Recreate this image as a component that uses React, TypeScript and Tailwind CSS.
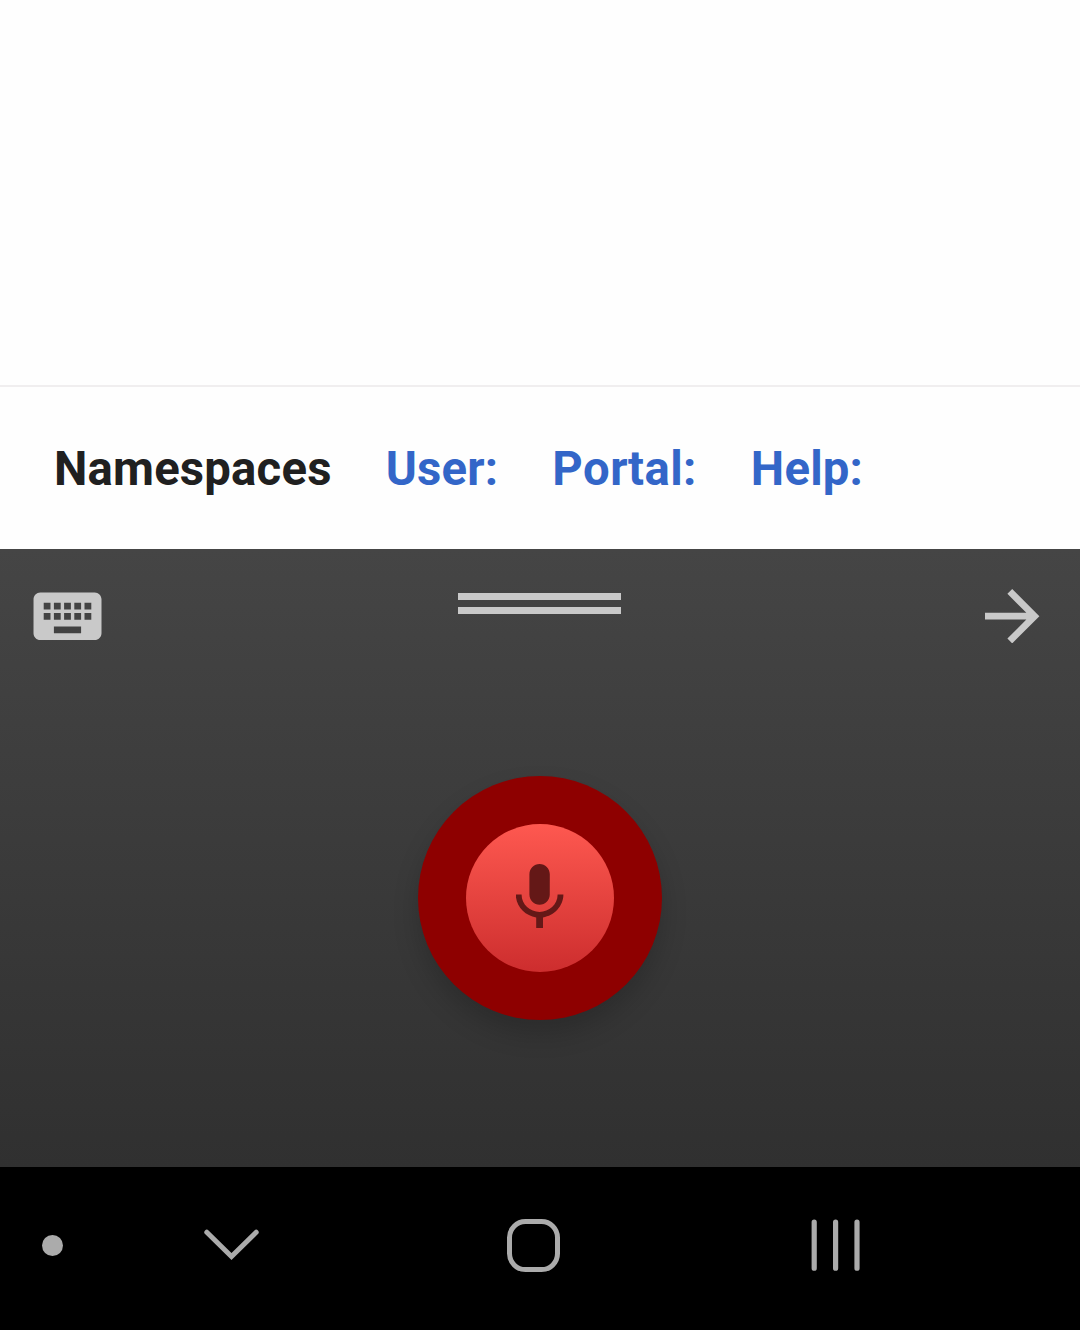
function KeyboardIcon() {
  return (
    <svg className="mt-[43px] h-[49px] w-[69px] fill-[#c9c9c9]" viewBox="0 0 69 49" aria-hidden="true">
      <path
        transform="translate(-6.3 -16.5) scale(3.4)"
        d="M20 5H4c-1.1 0-1.99.9-1.99 2L2 17c0 1.1.9 2 2 2h16c1.1 0 2-.9 2-2V7c0-1.1-.9-2-2-2zm-9 3h2v2h-2V8zm0 3h2v2h-2v-2zM8 8h2v2H8V8zm0 3h2v2H8v-2zm-1 2H5v-2h2v2zm0-3H5V8h2v2zm9 7H8v-2h8v2zm0-4h-2v-2h2v2zm0-3h-2V8h2v2zm3 3h-2v-2h2v2zm0-3h-2V8h2v2z"
      />
    </svg>
  );
}

function ArrowIcon() {
  return (
    <svg className="mt-[40px] h-[54.4px] w-[54.4px] fill-[#c9c9c9]" viewBox="4 4 16 16" aria-hidden="true">
      <path d="M12 4l-1.41 1.41L16.17 11H4v2h12.17l-5.58 5.59L12 20l8-8z" />
    </svg>
  );
}

function MicIcon() {
  return (
    <svg className="mb-[4px] h-[64.6px] w-[48px] fill-[#641817]" viewBox="0 0 48 64.6" aria-hidden="true">
      <path
        transform="translate(-17.2 -6.8) scale(3.4)"
        d="M12 14c1.66 0 2.99-1.34 2.99-3L15 5c0-1.66-1.34-3-3-3S9 3.34 9 5v6c0 1.66 1.34 3 3 3zM17.3 11c0 3-2.54 5.1-5.3 5.1S6.7 14 6.7 11H5c0 3.41 2.72 6.23 6 6.72V21h2v-3.28c3.28-.48 6-3.3 6-6.72h-1.7z"
      />
    </svg>
  );
}

export default function App() {
  return (
    <div className="flex h-[1330px] w-[1080px] flex-col overflow-hidden bg-white font-['Roboto',sans-serif]">
      <main className="h-[385px] shrink-0 bg-[#fefefe]" />
      <nav className="flex h-[164px] shrink-0 items-center gap-[54px] border-t-2 border-[#f0eeef] bg-[#fefefe] pt-[2px] pl-[54px] text-[47.25px] leading-[56px] font-bold tracking-[0.2px] whitespace-nowrap text-[#202020] [font-kerning:none]">
        <span>Namespaces</span>
        <a className="text-[#3366c8]">User:</a>
        <a className="tracking-[0.45px] text-[#3366c8]">Portal:</a>
        <a className="text-[#3366c8]">Help:</a>
      </nav>
      <section className="flex h-[617.5px] shrink-0 flex-col items-center bg-linear-to-b from-[#454545] to-[#303030]">
        <div className="flex h-[227px] w-full items-start justify-between pr-[40.4px] pl-[33px]">
          <KeyboardIcon />
          <div className="mt-[44px] ml-[-9px] flex h-[21px] w-[163px] flex-col justify-between">
            <div className="h-[7px] bg-[#c9c9c9]" />
            <div className="h-[7px] bg-[#c9c9c9]" />
          </div>
          <ArrowIcon />
        </div>
        <button className="mr-[0.6px] flex size-[244px] items-center justify-center rounded-full bg-[#8e0000] shadow-[0_14px_26px_rgba(0,0,0,0.18)]">
          <span className="flex size-[148px] items-center justify-center rounded-full bg-linear-to-b from-[#fe5850] to-[#cd2d2e]">
            <MicIcon />
          </span>
        </button>
      </section>
      <footer className="flex grow items-start bg-black pl-[42px]">
        <div className="mt-[68.5px] size-[21px] rounded-full bg-[#ababab]" />
        <svg className="mt-[61px] ml-[140px] h-[34px] w-[56px]" viewBox="0 0 56 34" fill="none" stroke="#ababab" strokeWidth="5" strokeLinecap="round" aria-hidden="true">
          <path d="M3.8 4.2L28.5 28.6L53.2 4.2" />
        </svg>
        <svg className="mt-[52px] ml-[247px] size-[54px]" viewBox="0 0 54 54" fill="none" stroke="#ababab" strokeWidth="5" aria-hidden="true">
          <rect x="3.5" y="2.6" width="48" height="48" rx="16" />
        </svg>
        <svg className="mt-[52px] ml-[251px] h-[54px] w-[50px]" viewBox="0 0 50 54" stroke="#ababab" strokeWidth="5.2" strokeLinecap="round" aria-hidden="true">
          <path d="M3.2 3.2v46M24.6 3.2v46M46 3.2v46" />
        </svg>
      </footer>
    </div>
  );
}
